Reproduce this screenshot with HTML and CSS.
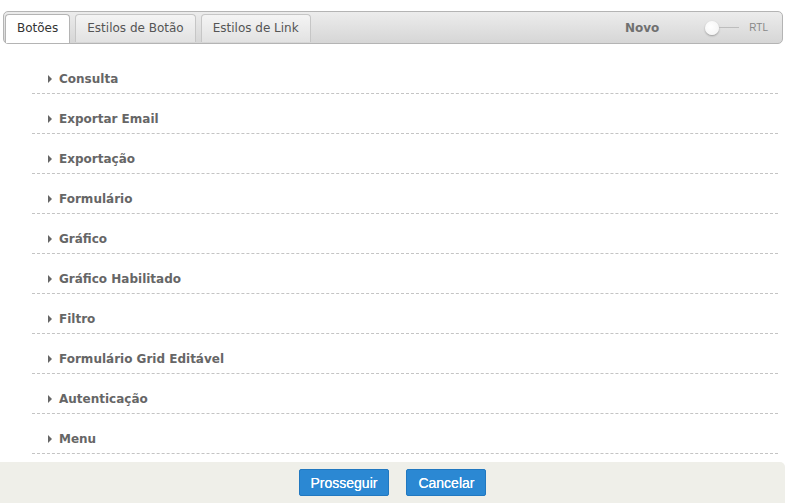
FILE: index.html
```html
<!DOCTYPE html>
<html lang="pt">
<head>
<meta charset="utf-8">
<link rel="stylesheet" href="styles.css">
</head>
<body>
<div class="page">
  <div class="header">
    <div class="tabs">
      <div class="tab active">Botões</div>
      <div class="tab">Estilos de Botão</div>
      <div class="tab">Estilos de Link</div>
    </div>
    <div class="tools">
      <span class="novo">Novo</span>
      <span class="toggle"><span class="knob"></span><span class="track"></span></span>
      <span class="rtl">RTL</span>
    </div>
  </div>
  <div class="list">
    <div class="row"><span class="arrow"></span>Consulta</div>
    <div class="row"><span class="arrow"></span>Exportar Email</div>
    <div class="row"><span class="arrow"></span>Exportação</div>
    <div class="row"><span class="arrow"></span>Formulário</div>
    <div class="row"><span class="arrow"></span>Gráfico</div>
    <div class="row"><span class="arrow"></span>Gráfico Habilitado</div>
    <div class="row"><span class="arrow"></span>Filtro</div>
    <div class="row"><span class="arrow"></span>Formulário Grid Editável</div>
    <div class="row"><span class="arrow"></span>Autenticação</div>
    <div class="row"><span class="arrow"></span>Menu</div>
  </div>
  <div class="footer">
    <button class="btn">Prosseguir</button>
    <button class="btn">Cancelar</button>
  </div>
</div>
</body>
</html>
```
FILE: styles.css
```css
html, body { margin: 0; padding: 0; background: #fff; }
body { font-family: "DejaVu Sans", Verdana, sans-serif; }
.page { width: 787px; height: 503px; display: flex; flex-direction: column; }
.header {
  margin: 11px 4px 0 3px;
  height: 31px;
  border: 1px solid #b4b4b4;
  border-radius: 5px;
  background: linear-gradient(#ececec, #d6d6d6);
  display: flex;
  align-items: flex-end;
  justify-content: space-between;
  box-sizing: content-box;
}
.tabs { display: flex; gap: 5px; padding-left: 1px; }
.tab {
  height: 27px;
  line-height: 27px;
  padding: 0 11px;
  font-size: 12px;
  color: #555;
  border: 1px solid #c6c6c6;
  border-bottom: none;
  border-radius: 4px 4px 0 0;
  background: linear-gradient(#f4f4f4, #e2e2e2);
}
.tab.active { background: #fff; color: #333; border-color: #b4b4b4; height: 28px; }
.tools { display: flex; align-items: center; height: 31px; padding-right: 14px; }
.novo { font-weight: bold; font-size: 12px; color: #707070; margin-right: 46px; }
.toggle { display: flex; align-items: center; width: 36px; }
.knob {
  width: 14px; height: 14px; border-radius: 50%;
  background: radial-gradient(circle at 40% 40%, #fff, #f2f2f2);
  box-shadow: 0 1px 2px rgba(0,0,0,0.3);
}
.track { width: 20px; height: 1px; background: #bdbdbd; }
.rtl { font-family: "Liberation Sans", Arial, sans-serif; font-size: 10px; color: #888; margin-left: 8px; }
.list { margin: 10px 9px 0 32px; flex: 1; }
.row {
  height: 32px;
  padding-bottom: 7px;
  box-sizing: content-box;
  border-bottom: 1px dashed #c4c4c4;
  display: flex;
  align-items: flex-end;
  padding-left: 16px;
  font-size: 12px;
  line-height: 14px;
  font-weight: bold;
  color: #666;
}
.arrow {
  width: 0; height: 0;
  border-left: 4px solid #666;
  border-top: 4px solid transparent;
  border-bottom: 4px solid transparent;
  margin-right: 7px;
  margin-bottom: 3px;
}
.footer {
  height: 41px;
  margin-right: 2px;
  background: #efefe9;
  border-radius: 0 5px 0 0;
  display: flex;
  justify-content: center;
  align-items: center;
  gap: 17px;
}
.btn {
  font-family: "Liberation Sans", Arial, sans-serif;
  font-size: 14px;
  color: #fff;
  background: #2b88d3;
  border: 1px solid #2178c0;
  border-radius: 2px;
  height: 27px;
  padding: 0 11px;
  cursor: pointer;
  text-shadow: 0 0 0.4px #fff;
}
```
